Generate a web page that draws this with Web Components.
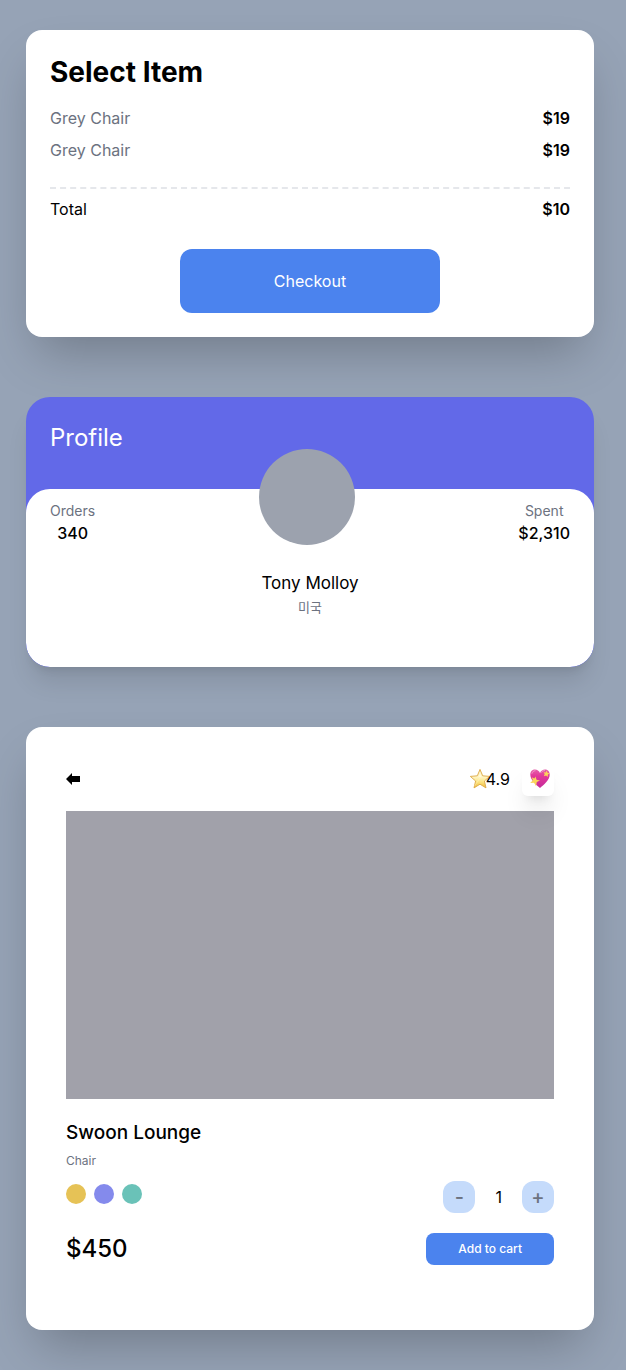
<!DOCTYPE html>
<html lang="en">
<head>
<meta charset="utf-8">
<meta name="viewport" content="width=device-width, initial-scale=1">
<title>Shop</title>
<style>
  html { background: #96a3b6; }
  body {
    margin: 0;
    padding: 30px 32px 40px 26px;
    display: grid;
    gap: 60px;
    color: #000;
    font-family: Inter, "Noto Sans CJK KR", sans-serif;
    font-size: 16px;
    line-height: 24px;
    --blue: #4b83ee;
    --muted: #6c727f;
  }
</style>
</head>
<body>
<checkout-card heading="Select Item">
  <price-row label="Grey Chair" price="$19" muted></price-row>
  <price-row label="Grey Chair" price="$19" muted></price-row>
  <price-row slot="total" label="Total" price="$10"></price-row>
</checkout-card>

<profile-card>
  <span slot="title">Profile</span>
  <stat-item slot="start" label="Orders">340</stat-item>
  <stat-item slot="end" label="Spent">$2,310</stat-item>
  <span slot="name">Tony Molloy</span>
  <span slot="country" lang="ko">미국</span>
</profile-card>

<product-card>
  <span slot="rating">4.9</span>
  <span slot="name">Swoon Lounge</span>
  <span slot="kind">Chair</span>
  <color-dots slot="colors"></color-dots>
  <quantity-stepper slot="quantity"></quantity-stepper>
  <span slot="price">$450</span>
</product-card>

<script>
const define = (name, html, setup) => customElements.define(name, class extends HTMLElement {
  constructor() {
    super();
    const template = document.createElement('template');
    template.innerHTML = html;
    this.attachShadow({ mode: 'open' }).append(template.content.cloneNode(true));
  }
  connectedCallback() { if (setup) setup(this, this.shadowRoot); }
});

define('price-row', `
<style>
  :host { display: flex; justify-content: space-between; }
  :host([muted]) .label { color: var(--muted); }
  .price { font-weight: 600; }
</style>
<span class="label"></span><span class="price"></span>`, (host, root) => {
  root.querySelector('.label').textContent = host.getAttribute('label');
  root.querySelector('.price').textContent = host.getAttribute('price');
});

define('checkout-card', `
<style>
  :host { display: block; padding: 24px; border-radius: 16px; background: #fff; box-shadow: 0 25px 50px -12px rgb(0 0 0 / .25); }
  h2 { margin: 0 0 16px; font-size: 28px; line-height: 36px; font-weight: 700; }
  .items { display: grid; gap: 8px; }
  svg { display: block; width: 100%; height: 2px; margin: 25px 0 8px; }
  button { display: block; width: 50%; margin: 28px auto 0; padding: 20px; border: 0; border-radius: 12px; background: var(--blue); color: #fff; font: inherit; }
</style>
<h2></h2>
<div class="items"><slot></slot></div>
<svg aria-hidden="true"><line x1="0" y1="1" x2="100%" y2="1" stroke="#e5e7eb" stroke-width="2" stroke-dasharray="6 4.08"/></svg>
<slot name="total"></slot>
<button type="button">Checkout</button>`, (host, root) => {
  root.querySelector('h2').textContent = host.getAttribute('heading');
});

define('stat-item', `
<style>
  :host { display: block; text-align: center; font-weight: 500; }
  .label { display: block; font-size: 14px; line-height: 20px; font-weight: 400; color: var(--muted); }
</style>
<span class="label"></span><slot></slot>`, (host, root) => {
  root.querySelector('.label').textContent = host.getAttribute('label');
});

define('profile-card', `
<style>
  :host { display: block; border-radius: 24px; overflow: hidden; background: #6269e8; box-shadow: 0 20px 25px -5px rgb(0 0 0 / .1), 0 8px 10px -6px rgb(0 0 0 / .1); }
  h2 { margin: 0; padding: 25px 24px 35px; color: #fff; font-size: 24px; line-height: 32px; font-weight: 400; }
  .panel { display: flow-root; padding: 0 24px 50px; border-radius: 24px; background: #fff; text-align: center; }
  .top { display: flex; justify-content: space-between; align-items: end; margin: -40px 0 24px; }
  .avatar { width: 96px; height: 96px; border-radius: 50%; background: #9ca2ae; }
  .name { font-size: 17px; line-height: 28px; }
  .country { font-size: 13px; line-height: 20px; color: var(--muted); }
</style>
<h2><slot name="title"></slot></h2>
<div class="panel">
  <div class="top"><slot name="start"></slot><div class="avatar"></div><slot name="end"></slot></div>
  <div class="name"><slot name="name"></slot></div>
  <div class="country"><slot name="country"></slot></div>
</div>`);

define('color-dots', `
<style>
  :host { display: flex; gap: 8px; }
  input { appearance: none; width: 20px; height: 20px; margin: 0; border-radius: 50%; background: #e6c256; }
  input:nth-of-type(2) { background: #848aec; }
  input:nth-of-type(3) { background: #6ac2b8; }
</style>
<input type="radio" name="color" aria-label="Yellow"><input type="radio" name="color" aria-label="Indigo"><input type="radio" name="color" aria-label="Teal">`);

define('quantity-stepper', `
<style>
  :host { display: flex; align-items: center; gap: 20px; }
  button { width: 32px; height: 32px; padding: 0; border: 0; border-radius: 12px; background: #c5dbfb; color: var(--muted); font: inherit; font-size: 20px; line-height: 32px; font-weight: 500; }
</style>
<button type="button" aria-label="Decrease">-</button><output>1</output><button type="button" aria-label="Increase">+</button>`, (host, root) => {
  const out = root.querySelector('output');
  const [less, more] = root.querySelectorAll('button');
  less.onclick = () => { out.value = Math.max(1, +out.value - 1); };
  more.onclick = () => { out.value = +out.value + 1; };
});

define('product-card', `
<style>
  :host { display: block; padding: 35px 40px 65px; border-radius: 16px; background: #fff; box-shadow: 0 25px 50px -12px rgb(0 0 0 / .25); }
  header, .row { display: flex; align-items: center; justify-content: space-between; }
  header { position: relative; z-index: 1; margin-bottom: 15px; }
  svg { display: block; flex: none; }
  button { border: 0; font: inherit; }
  .back { padding: 0; background: none; }
  .tools { display: flex; align-items: center; gap: 12px; }
  .rating { display: flex; align-items: center; }
  .rating svg { margin-right: -5px; }
  .like { display: grid; place-items: center; width: 32px; height: 34px; padding: 0 0 0 4px; border-radius: 6px; background: #fff; box-shadow: 0 20px 25px -5px rgb(0 0 0 / .1), 0 8px 10px -6px rgb(0 0 0 / .1); }
  .photo { aspect-ratio: 488 / 288; background: #a1a1aa; }
  h3 { margin: 20px 0 6px; font-size: 19px; line-height: 28px; font-weight: 500; }
  .kind { margin-bottom: 12px; font-size: 12px; line-height: 16px; color: var(--muted); }
  .colors { align-items: start; margin-bottom: 20px; }
  ::slotted(color-dots) { margin-top: 3px; }
  .price { font-size: 24px; line-height: 32px; font-weight: 500; }
  .add { padding: 8px 32px; border-radius: 8px; background: var(--blue); color: #fff; font-size: 12px; line-height: 16px; font-weight: 500; }
</style>
<header>
  <button class="back" type="button" aria-label="Back">
    <svg width="14" height="14" viewBox="0 0 14 14"><path d="M0 7 6 1v3h8v6H6v3z" fill="#000"/></svg>
  </button>
  <div class="tools">
    <div class="rating">
      <svg width="22" height="22" viewBox="0 0 22 22" aria-hidden="true">
        <defs><linearGradient id="gold" x1="0" y1="0" x2="0" y2="1"><stop offset="0" stop-color="#f4dc92"/><stop offset=".4" stop-color="#fff6c5"/><stop offset=".7" stop-color="#fbe17c"/><stop offset="1" stop-color="#f0b93b"/></linearGradient></defs>
        <path d="m11 1.4 2.7 6.4 7 .6-5.3 4.6 1.6 6.9-6-3.7-6 3.7 1.6-6.9L1.300 8.400l7-.6z" fill="url(#gold)" stroke="#dca947" stroke-width=".9" stroke-linejoin="round"/>
        <path d="m11 4 1.300 4.900H9.700zM11 10l-5.500 8" fill="#fffbe2" stroke="#fff8d0" stroke-width=".4"/>
      </svg>
      <slot name="rating"></slot>
    </div>
    <button class="like" type="button" aria-label="Favourite">
      <svg width="22" height="22" viewBox="0 0 22 22">
        <defs><linearGradient id="pink" x1="0" y1="0" x2="0" y2="1"><stop offset="0" stop-color="#e65da9"/><stop offset=".35" stop-color="#e2389a"/><stop offset="1" stop-color="#c52b9a"/></linearGradient></defs>
        <path d="M11 20C7.500 17.300 1.400 12 1.300 6.800 1.300 3.500 3.500 1.600 6 1.600c2.200 0 4.100 1.200 5 3.400.9-2.200 2.800-3.400 5-3.400 2.500 0 4.700 1.900 4.700 5.200 0 5.200-6.200 10.500-9.700 13.200z" fill="url(#pink)"/>
        <path d="M3 5.300c.5-1.700 1.600-2.500 3-2.600M12.400 4.300c.7-1 1.800-1.700 3.200-1.700" fill="none" stroke="#f6a7d0" stroke-width=".8" stroke-linecap="round"/>
        <path d="m6.500 8.400 1 3.300 3.500.9-3.200 1.400-.8 4.200-1.800-3.500-4 .2 2.700-2.600-1.200-3 2.700 1.100z" fill="#fad65a"/>
        <path d="m17.700 2.600.8 2.200 2.200.5-1.800 1.300-.2 2.300-1.600-1.300-2.200.6.8-2.100-1.100-1.800 2.100.1z" fill="#fad65a"/>
      </svg>
    </button>
  </div>
</header>
<div class="photo"></div>
<h3><slot name="name"></slot></h3>
<div class="kind"><slot name="kind"></slot></div>
<div class="row colors"><slot name="colors"></slot><slot name="quantity"></slot></div>
<div class="row"><div class="price"><slot name="price"></slot></div><button class="add" type="button">Add to cart</button></div>`);
</script>
</body>
</html>
